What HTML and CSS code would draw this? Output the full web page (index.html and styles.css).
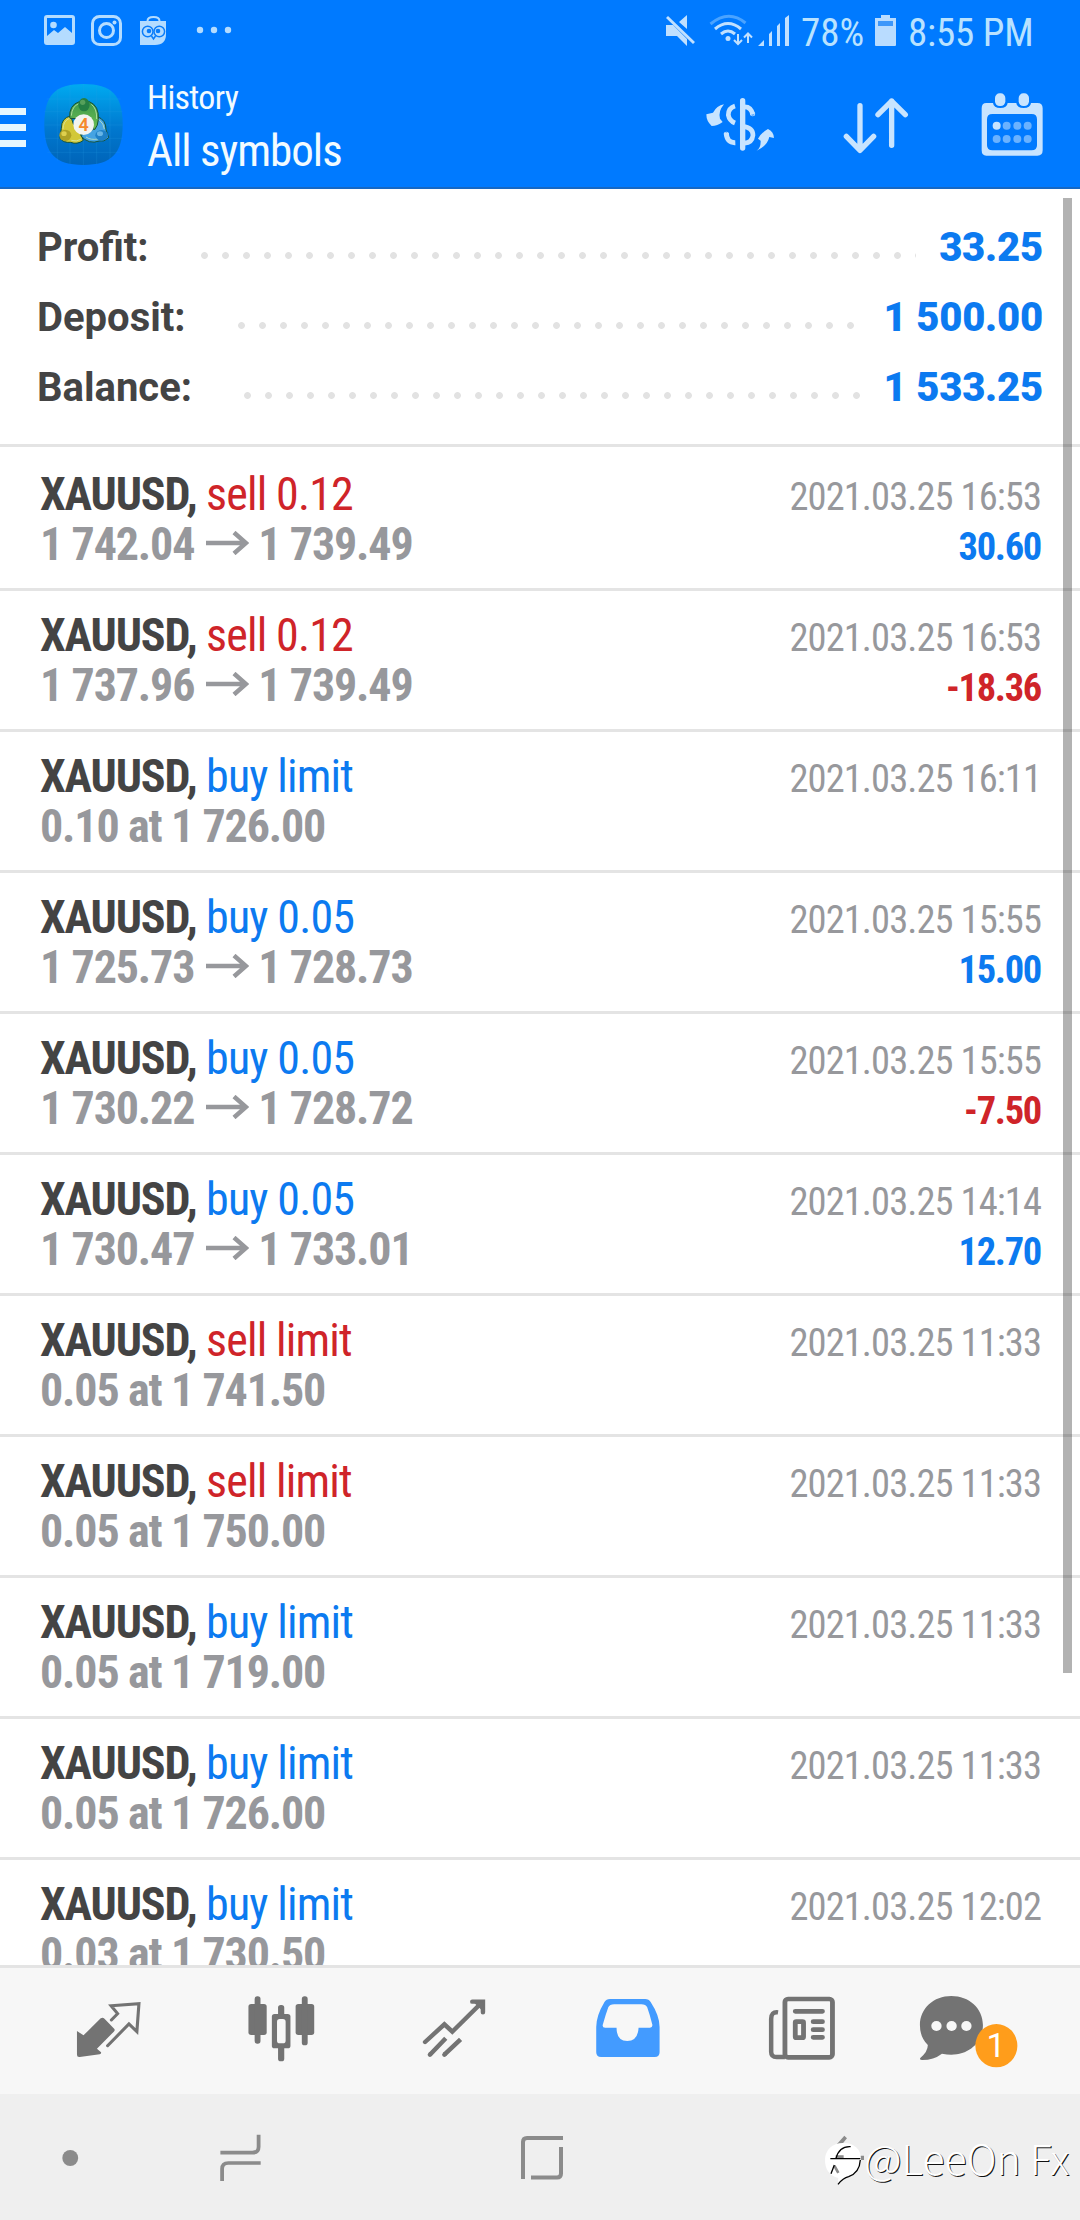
FILE: index.html
```html
<!DOCTYPE html>
<html lang="en">
<head>
<meta charset="utf-8">
<title>History</title>
<link rel="stylesheet" href="styles.css">
</head>
<body>
<div class="screen">
  <header class="top">
    <div class="status">
      <svg class="status-left" viewBox="0 0 240 60" fill="#b4dcff">
        <path fill-rule="evenodd" d="M47 15h25q3 0 3 3v24q0 3-3 3H47q-3 0-3-3V18q0-3 3-3zM47 18v18l7-6 4 3 7-6 7 6V18z"/>
        <circle cx="53.500" cy="25" r="3.300"/>
        <g fill="none" stroke="#b4dcff" stroke-width="3"><rect x="92.500" y="16.500" width="28" height="28" rx="7"/><circle cx="106.500" cy="30.500" r="7"/></g>
        <circle cx="114.500" cy="22.500" r="2"/>
        <path d="M140 21h26v13q0 11-11 11h-15z"/>
        <path d="M147.500 21q0-4 6-4t6 4" fill="none" stroke="#b4dcff" stroke-width="2"/>
        <g fill="none" stroke="#0a7dfa" stroke-width="1.500"><circle cx="147.700" cy="31.500" r="5.300"/><circle cx="159.300" cy="31.500" r="5.300"/><path d="M151.500 36l2 3 2-3"/></g>
        <circle cx="149" cy="31" r="2.300" fill="#0a7dfa"/><circle cx="158" cy="31" r="2.300" fill="#0a7dfa"/>
        <circle cx="200" cy="30" r="3.200"/><circle cx="214" cy="30" r="3.200"/><circle cx="228" cy="30" r="3.200"/>
      </svg>
      <svg class="status-signal" viewBox="660 0 135 60" fill="#c0e0ff">
        <path d="M666 25h7l14 14v7l-10-10h-11zM679 22l8-7v14zM666 18l2-2 27 26-2 2z"/>
        <g fill="none" stroke-linecap="butt" stroke-width="3">
          <path stroke="#4aa3ff" d="M710.500 24q18-15 35-1"/>
          <path stroke="#c0e0ff" d="M715 29q13-11 26 0M721 34q7-6 14 0"/>
          <path stroke="#c0e0ff" stroke-width="2" d="M738 34v10M734 40l4 4 4-4M748 43V34M744 37.500l4-4 4 4"/>
        </g>
        <circle cx="728" cy="38.500" r="2.500"/>
        <path d="M758 46l6-6v6zM769 46V34l3-3v15zM777 46V26l3-3v23zM785 46V18l4-3v31z"/>
      </svg>
      <span class="pct">78%</span>
      <svg class="battery" viewBox="875 0 22 60" fill="#b9dcff"><path d="M881 15h9v3h6v27q0 1-1 1h-19q-1 0-1-1V18h6z"/><path fill="#3d97fa" d="M878 21h15v5h-15z"/></svg>
      <span class="clock">8:55 PM</span>
    </div>
    <div class="toolbar">
      <svg class="burger" viewBox="0 60 44 127" fill="#e6f7ff"><path d="M0 108h26v7H0zM0 124h26v7H0zM0 140h26v7H0z"/></svg>
      <svg class="logo" viewBox="42 45 240 243">
        <defs>
          <linearGradient id="tile" x2="0" y2="1"><stop offset="0" stop-color="#00aaf0"/><stop offset=".55" stop-color="#0078cf"/><stop offset="1" stop-color="#0064b8"/></linearGradient>
          <linearGradient id="green" x2="0" y2="1"><stop offset="0" stop-color="#3f9a4b"/><stop offset="1" stop-color="#6bbf55"/></linearGradient>
        </defs>
        <path fill="url(#tile)" d="M160 45C245 45 278 78 278 166S245 288 160 288 43 254 43 166 75 45 160 45z"/>
        <path d="M82 60v215M120 47v238M160 45v243M200 48v237M240 62v208M50 90h222M43 128h235M43 168h235M43 208h235M52 250h218" stroke="#29a0e6" stroke-opacity=".3" stroke-width="2"/>
        <g stroke="#155238" stroke-width="3">
          <path fill="#d2c839" d="M122 141Q94 146 94 178L90 208Q100 222 122 220Q142 228 160 214L150 190 130 165z"/>
          <path fill="#45a3e2" d="M202 143Q228 152 228 182L236 206Q222 220 208 216Q176 228 152 200L192 180z"/>
          <path fill="url(#green)" d="M119 148Q116 108 148 98H178Q208 110 205 152Q204 170 194 182L168 150z"/>
        </g>
        <path fill="none" stroke="#d7f0bc" stroke-opacity=".7" stroke-width="3" d="M124 140Q126 112 146 104M184 106Q201 118 200 150M120 147Q99 156 99 180M124 214Q140 219 152 211M207 152Q222 164 223 180M204 210Q182 214 168 204"/>
        <ellipse cx="162" cy="107" rx="17" ry="20" fill="#257f43"/><ellipse cx="158" cy="100" rx="8" ry="8" fill="#77b66b" opacity=".6"/>
        <ellipse cx="106" cy="199" rx="18" ry="17" fill="#ada125"/><ellipse cx="102" cy="194" rx="8" ry="7" fill="#fff06a" opacity=".6"/>
        <ellipse cx="215" cy="199" rx="19" ry="16" fill="#1f81c8"/><ellipse cx="210" cy="194" rx="9" ry="7" fill="#9ad8fa" opacity=".6"/>
        <circle cx="161" cy="167" r="31" fill="#f2f4f0"/>
        <text class="logo-num" x="161" y="186" text-anchor="middle">4</text>
      </svg>
      <div class="titles"><span class="title-sm">History</span><span class="title-lg">All symbols</span></div>
      <svg class="act-currency" viewBox="48 -60 208 381" fill="#c8e4ff">
        <path d="M102 73Q80 77 69 98L49 103Q49 124 65 138Q82 138 98 126L90 116Q84 94 102 73z"/>
        <path d="M200 212Q213 203 212 182L204 176Q216 156 234 147Q251 154 252 174L238 171Q232 198 200 212z"/>
        <g fill="none" stroke="#c8e4ff"><path stroke-width="16" stroke-linecap="round" d="M158 62v142"/>
        <path stroke-width="14" d="M135 78Q115 84 115 105Q118 122 135 129"/><path stroke-width="15" d="M109 159q1 30 27 29"/><circle cx="109" cy="163" r="1" stroke-width="13"/>
        <path stroke-width="14" d="M158 81Q184 78 188 104"/><circle cx="188" cy="101" r="1" stroke-width="13"/>
        <path stroke-width="14" d="M158 139Q189 142 189 166Q186 191 160 189"/></g>
      </svg>
      <svg class="act-sort" viewBox="610 180 196 381" fill="none" stroke="#c8e4ff" stroke-width="16" stroke-linecap="round" stroke-linejoin="round"><path d="M661 317v134M620 409l41 42 41-42M756 436V303M715 344l41-41 41 41"/></svg>
      <svg class="act-calendar" viewBox="1024 180 186 381" fill="#c8e4ff">
        <path fill-rule="evenodd" d="M1040 309h20q2 15 22 15t22-15h26q2 15 22 15t22-15h19q16 0 16 16v126q0 16-16 16h-153q-14 0-14-16V325q0-16 14-16zM1058 342q-16 0-16 16v78q0 15 16 15h118q16 0 16-15v-78q0-16-16-16z"/>
        <rect x="1066" y="280" width="31" height="38" rx="14"/><rect x="1137" y="280" width="31" height="38" rx="14"/>
        <circle cx="1071" cy="377" r="12"/>
        <g fill="#6ab2ff"><circle cx="1101" cy="377" r="12"/><circle cx="1133" cy="377" r="12"/><circle cx="1164" cy="377" r="12"/><circle cx="1071" cy="417" r="12"/><circle cx="1101" cy="417" r="12"/><circle cx="1133" cy="417" r="12"/><circle cx="1164" cy="417" r="12"/></g>
      </svg>
    </div>
  </header>

  <main class="content">
    <section class="summary">
      <div class="sum-row"><span>Profit:</span><i class="dots"></i><b>33.25</b></div>
      <div class="sum-row"><span>Deposit:</span><i class="dots"></i><b>1 500.00</b></div>
      <div class="sum-row"><span>Balance:</span><i class="dots"></i><b>1 533.25</b></div>
    </section>
    <div class="deals" id="deals"></div>
    <div class="scrollbar"></div>
  </main>

  <nav class="tabs">
    <svg viewBox="62.400 384 502.400 378" preserveAspectRatio="none" fill="#737373">
      <path d="M222 573l19 13 50-51q6-4 11 1l28 30q4 5-1 9l-49 51 12 11q1 5-4 6l-58 8q-8 1-8-7z"/>
      <path d="M322 540l18-19-19-24 81-6-6 84-23-23-62 65" fill="none" stroke="#737373" stroke-width="9" stroke-linecap="round"/>
    </svg>
    <svg viewBox="564.800 384 502.400 378" preserveAspectRatio="none" fill="#737373">
      <rect x="720" y="492" width="53" height="93" rx="8"/><rect x="738" y="469" width="17" height="142" rx="8"/>
      <rect x="857" y="492" width="54" height="93" rx="8"/><rect x="875" y="469" width="17" height="147" rx="8"/>
      <rect x="788" y="522" width="54" height="103" rx="8"/><rect x="806" y="495" width="18" height="169" rx="8"/><rect x="803" y="537" width="25" height="73" rx="8" fill="#f7f7f7"/>
    </svg>
    <svg viewBox="1067.200 384 502.400 378" preserveAspectRatio="none" fill="none" stroke="#737373" stroke-width="13" stroke-linecap="round">
      <path d="M1233 606l56-53 23 22 85-87M1370 485h31v32"/><path d="M1376 486l25 25V486z" fill="#737373" stroke-width="4"/><path stroke-linecap="butt" d="M1247 644l46-49M1289 644l47-46"/><path d="M1247 644l1-1M1289 644l1-1"/>
    </svg>
    <svg viewBox="1.600 384 502.400 378" preserveAspectRatio="none" fill="#439bff">
      <path fill-rule="evenodd" d="M202 477h102q11 0 16 9 26 41 26 75v76q0 14-14 14H176q-14 0-14-14v-76q0-34 24-75 5-9 16-9zM214 493q-13 0-17 9-8 23-16 52-2 9 7 9h33q0 40 31 40t33-40h33q8 0 7-9-7-29-15-52-4-9-17-9z"/>
    </svg>
    <svg viewBox="504 384 502.400 378" preserveAspectRatio="none" fill="none" stroke="#737373">
      <rect x="710" y="477" width="138" height="175" rx="9" stroke-width="14"/><path stroke-width="13" d="M690 517q-20-3-20 20v98q0 16 16 16h24"/>
      <g stroke-width="14" stroke-linecap="round"><path d="M740 514h79M792 545h27M792 569h27M792 592h27"/></g><rect x="740" y="545" width="24" height="48" rx="3" stroke-width="14"/>
    </svg>
    <svg viewBox="1006.400 384 502.400 378" preserveAspectRatio="none">
      <path fill="#737373" d="M1193 468c52 0 92 37 92 87 0 52-40 89-92 89q-12 0-27-3-24 19-57 19-9 0-6-6 22-19 22-39-23-23-23-60c0-50 40-87 91-87z"/>
      <g fill="#f7f7f7"><circle cx="1150" cy="558" r="15"/><circle cx="1194" cy="558" r="15"/><circle cx="1237" cy="558" r="15"/></g>
      <ellipse cx="1324" cy="617" rx="61" ry="65" fill="#ff9d1b"/>
      <text class="badge-num" x="1323" y="651" text-anchor="middle">1</text>
    </svg>
  </nav>

  <footer class="sysnav">
    <svg class="nav-left" viewBox="0 762 1306.800 378" preserveAspectRatio="none" fill="none" stroke="#8b8b8b" stroke-width="11"><ellipse cx="204" cy="954" rx="23" ry="24" fill="#8b8b8b" stroke="none"/><path d="M640 938h93q18 0 18-18v-36M757 969h-94q-18 0-18 18v36"/></svg>
    <svg class="nav-home" viewBox="500 2094 84 126" fill="none" stroke="#8b8b8b" stroke-width="4"><path d="M523 2179v-37q0-4 4-4h36M531 2177.500h26q4 0 4-4V2147"/></svg>
    <div class="credit">
      <svg viewBox="30 -78 130 378">
        <path d="M76 74l24-27 8 8-16 19zM120 107h40v13h-40z" fill="#8b8b8b"/>
        <path d="M96 69c34 0 54 18 54 48 0 34-24 53-51 58l-19 19 2-20c-27-7-40-26-40-54 0-29 22-51 54-51z" fill="#fff"/>
        <path d="M74 110h24M70 137l12 22" stroke="#8b8b8b" stroke-width="8"/>
        <path d="M58 116h90M75 115q10-37 44-35M60 161l10-26M148 120q-2 38-35 50-17 4-32 23" fill="none" stroke="#000" stroke-width="4"/>
      </svg>
      <span>@LeeOn Fx</span>
    </div>
  </footer>
</div>
<script src="deals.js"></script>
</body>
</html>
```
FILE: deals.js
```js
const deals = [
  ["sell", "sell 0.12", "1 742.04", "1 739.49", "2021.03.25 16:53", "30.60"],
  ["sell", "sell 0.12", "1 737.96", "1 739.49", "2021.03.25 16:53", "-18.36"],
  ["buy", "buy limit", "0.10 at 1 726.00", "", "2021.03.25 16:11", ""],
  ["buy", "buy 0.05", "1 725.73", "1 728.73", "2021.03.25 15:55", "15.00"],
  ["buy", "buy 0.05", "1 730.22", "1 728.72", "2021.03.25 15:55", "-7.50"],
  ["buy", "buy 0.05", "1 730.47", "1 733.01", "2021.03.25 14:14", "12.70"],
  ["sell", "sell limit", "0.05 at 1 741.50", "", "2021.03.25 11:33", ""],
  ["sell", "sell limit", "0.05 at 1 750.00", "", "2021.03.25 11:33", ""],
  ["buy", "buy limit", "0.05 at 1 719.00", "", "2021.03.25 11:33", ""],
  ["buy", "buy limit", "0.05 at 1 726.00", "", "2021.03.25 11:33", ""],
  ["buy", "buy limit", "0.03 at 1 730.50", "", "2021.03.25 12:02", ""]
];
const arrow = '<svg class="arrow" viewBox="0 0 43 24"><path d="M0 12h40M28 1.500l12 10.500-12 10.500" fill="none" stroke="#97989c" stroke-width="4.500"/></svg>';
document.getElementById("deals").innerHTML = deals.map(([side, action, from, to, date, result]) => `
  <article class="deal">
    <div class="line"><span class="symbol">XAUUSD, <span class="${side}">${action}</span></span><time>${date}</time></div>
    <div class="line"><span class="price">${from}${to ? arrow + to : ""}</span><span class="result ${result[0] === "-" ? "sell" : "buy"}">${result}</span></div>
  </article>`).join("");
```
FILE: styles.css
```css
* { box-sizing: border-box; }
body { margin: 0; font-family: Roboto, "Liberation Sans", sans-serif; }
svg { display: block; flex: none; }
.screen { width: 1080px; height: 2220px; display: flex; flex-direction: column; overflow: hidden; background: #fff; }

.top { flex: none; height: 189px; background: #007aff; border-bottom: 2px solid #1668c4; }
.status { height: 60px; display: flex; color: #b9e2ff; font-size: 39px; font-stretch: 75%; line-height: 66px; white-space: nowrap; }
.status-left { width: 240px; height: 60px; margin-right: 420px; }
.status-signal { width: 135px; height: 60px; }
.pct { width: 80px; padding-left: 6px; }
.battery { width: 22px; height: 60px; }
.clock { padding-left: 11px; letter-spacing: -.2px; }
.toolbar { height: 127px; display: flex; align-items: center; }
.burger { width: 44px; height: 127px; }
.logo { width: 80px; height: 81px; margin-top: 2px; }
.logo-num { font-size: 54px; font-weight: 600; fill: #f58a2b; }
.titles { width: 558px; padding: 4px 0 0 23px; display: flex; flex-direction: column; color: #f2fbff; font-stretch: 75%; }
.title-sm { font-size: 34px; line-height: 50px; letter-spacing: -.7px; }
.title-lg { font-size: 45px; line-height: 58px; letter-spacing: -1px; }
.act-currency { width: 69.300px; height: 127px; margin-left: 24px; }
.act-sort { width: 65.300px; height: 127px; margin-left: 68px; }
.act-calendar { width: 62px; height: 127px; margin-left: 72px; }

.content { flex: 1; min-height: 0; position: relative; overflow: hidden; }
.summary { height: 258px; padding: 24px 37px 0 37px; border-bottom: 3px solid #e4e4e4; }
.sum-row { height: 70px; display: flex; font-size: 40px; line-height: 70px; font-weight: 700; color: #444; }
.sum-row b { color: #0c7af0; letter-spacing: -.2px; }
.dots { flex: 1; height: 7px; margin: 39px 23px 0 52px; background: radial-gradient(circle at 3.500px 3.500px, #e2e2e2 3px, transparent 3.800px) 0 0 / 21px 7px; }
.deals { padding-top: 3px; }
.deal { height: 141px; padding: 19px 39px 0 40px; border-bottom: 3px solid #e4e4e4; }
.line { height: 50px; display: flex; justify-content: space-between; align-items: baseline; line-height: 50px; font-size: 46px; font-stretch: 75%; letter-spacing: -1.150px; white-space: nowrap; }
.symbol { color: #444; font-weight: 700; }
.symbol span { font-weight: 400; letter-spacing: -.850px; }
.symbol .sell, .sell { color: #cf2429; }
.buy { color: #0c7af0; }
.price { color: #97989c; font-weight: 700; }
.arrow { display: inline-block; width: 43px; height: 24px; margin: 0 9px 5px 12px; }
.line time { font-size: 38.500px; color: #97989c; letter-spacing: -.920px; }
.result { font-size: 38.500px; font-weight: 700; letter-spacing: -1.300px; }
.scrollbar { position: absolute; top: 9px; right: 8.500px; width: 9px; height: 1475px; background: rgba(0, 0, 0, .3); }

.tabs { flex: none; height: 129px; padding-left: 21.500px; display: flex; background: #f7f7f7; border-top: 3px solid #e4e4e4; }
.tabs svg { width: 173px; height: 126px; overflow: visible; }
.badge-num { font-size: 98px; fill: #fff; }
.sysnav { flex: none; height: 126px; display: flex; background: #efefef; }
.nav-left { width: 450px; height: 126px; margin-right: 50px; }
.nav-home { width: 84px; height: 126px; }
.credit { margin-left: 237px; display: flex; align-items: center; white-space: nowrap; color: #fff; font: 300 41px/126px "Noto Sans CJK SC", sans-serif; text-shadow: 1px 1px 0 #111; }
.credit svg { width: 43.300px; height: 126px; }
```
